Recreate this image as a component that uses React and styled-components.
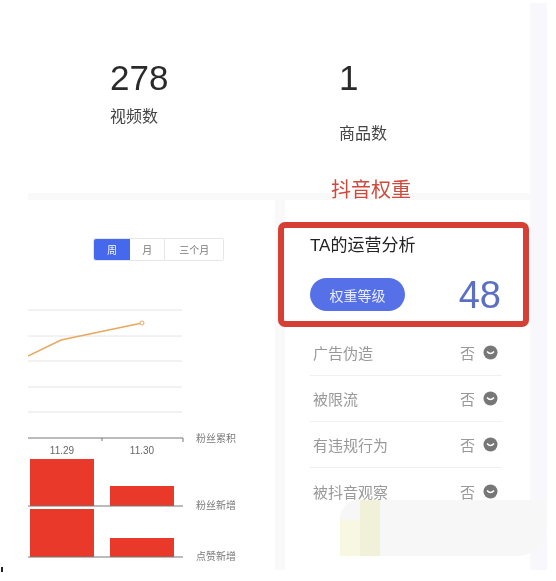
import React from 'react'
import styled, { createGlobalStyle } from 'styled-components'

const Global = createGlobalStyle`
  html, body { margin: 0; padding: 0; background: #fff; }
  body { font-family: "Liberation Sans", "Noto Sans CJK SC", sans-serif; }
`

const Page = styled.div`
  position: relative;
  width: 556px;
  height: 581px;
  overflow: hidden;
  background: #fff;
  display: flex;
  filter: blur(0.7px);
`
const Main = styled.div`
  width: 502px;
  margin-left: 28px;
  display: flex;
  flex-direction: column;
  height: 570px;
`
const SideStrip = styled.div`
  width: 17px;
  height: 567px;
  margin-top: 3px;
  background: #f8f8fc;
`
const Stats = styled.div`
  height: 193px;
  display: flex;
  padding-left: 82px;
  box-sizing: border-box;
  background: #fff;
`
const Stat = styled.div`
  width: ${(props) => props.width};
  padding-top: 58px;
  color: #2a2a2a;
`
const StatNum = styled.div`
  font-size: 35px;
  line-height: 40px;
`
const StatLabel = styled.div`
  font-size: 16px;
  line-height: 22px;
  color: #444;
  margin-top: ${(props) => props.top};
`
const Lower = styled.div`
  flex: 1;
  display: flex;
  gap: 10px;
  padding-top: 7px;
  background: #f9f9fa;
`
const ChartPanel = styled.div`
  width: 247px;
  background: #fff;
  display: flex;
  flex-direction: column;
`
const RangeBar = styled.div`
  display: flex;
  margin: 38px 0 0 65px;
  width: 131px;
  height: 23px;
  border: 1px solid #e6e6e8;
  border-radius: 2px;
  box-sizing: border-box;
`
const RangeBtn = styled.div`
  width: ${(props) => props.width};
  display: flex;
  align-items: center;
  justify-content: center;
  font-size: 10px;
  color: ${(props) => (props.active ? '#fff' : '#777')};
  background: ${(props) => (props.active ? '#4668ec' : '#fff')};
  border-right: ${(props) => (props.active ? 'none' : '1px solid #e6e6e8')};
  border-radius: ${(props) => (props.active ? '2px 0 0 2px' : '0')};
  &:last-child { border-right: none; }
`
const Chart = styled.svg`
  display: block;
  margin-top: 39px;
`
const AnalysisPanel = styled.div`
  flex: 1;
  background: #fff;
  padding: 0 28px 0 25px;
  display: flex;
  flex-direction: column;
`
const Title = styled.div`
  margin-top: 34px;
  font-size: 17px;
  line-height: 24px;
  color: #222;
`
const ScoreRow = styled.div`
  margin-top: 20px;
  display: flex;
  align-items: center;
  justify-content: space-between;
  height: 33px;
  padding-right: 1px;
`
const Pill = styled.div`
  width: 95px;
  height: 33px;
  border-radius: 17px;
  background: #5670e8;
  color: #e8ecff;
  font-size: 14px;
  display: flex;
  align-items: center;
  justify-content: center;
`
const Score = styled.div`
  font-size: 38px;
  line-height: 44px;
  margin-top: 1px;
  color: #5b6fc4;
`
const Rows = styled.div`
  margin-top: 19px;
  display: flex;
  flex-direction: column;
`
const Row = styled.div`
  height: 46px;
  display: flex;
  align-items: center;
  justify-content: space-between;
  padding: 0 4px 0 3px;
  border-bottom: 1px solid #f0f0f0;
  box-sizing: border-box;
  font-size: 15px;
  color: #999;
  &:last-child { border-bottom: none; }
`
const RowValue = styled.div`
  display: flex;
  align-items: center;
  gap: 8px;
`
const Annotation = styled.div`
  position: absolute;
  left: 331px;
  top: 177px;
  font-size: 20px;
  line-height: 26px;
  color: #cf4a3c;
`
const Highlight = styled.div`
  position: absolute;
  left: 278px;
  top: 222px;
  width: 251px;
  height: 105px;
  box-sizing: border-box;
  border: 6px solid #d63f33;
  border-radius: 7px;
`
const Smudge = styled.div`
  position: absolute;
  left: 340px;
  top: 500px;
  width: 206px;
  height: 56px;
  background: #f7f7f8;
  border-radius: 20px 4px 30px 40px;
`
const SmudgePatch = styled.div`
  position: absolute;
  left: ${(props) => props.left};
  top: ${(props) => props.top};
  width: 20px;
  bottom: 0;
  background: ${(props) => props.color};
`
const Tick = styled.div`
  position: absolute;
  left: 1px;
  top: 567px;
  width: 2px;
  height: 5px;
  background: #222;
`

const StatusIcon = () => (
  <svg width="15" height="15" viewBox="0 0 15 15">
    <circle cx="7.5" cy="7.5" r="7" fill="#777" />
    <path d="M4 6.5 Q7.5 10.5 11 6.5" fill="none" stroke="#fff" strokeWidth="1.5" />
  </svg>
)

const gridY = [10, 36, 61, 87, 112]

const App = () => {
  const rows = ['广告伪造', '被限流', '有违规行为', '被抖音观察']
  return (
    <Page>
      <Global />
      <Main>
        <Stats>
          <Stat width="229px">
            <StatNum>278</StatNum>
            <StatLabel top="8px">视频数</StatLabel>
          </Stat>
          <Stat>
            <StatNum>1</StatNum>
            <StatLabel top="25px">商品数</StatLabel>
          </Stat>
        </Stats>
        <Lower>
          <ChartPanel>
            <RangeBar>
              <RangeBtn width="37px" active>周</RangeBtn>
              <RangeBtn width="35px">月</RangeBtn>
              <RangeBtn width="59px">三个月</RangeBtn>
            </RangeBar>
            <Chart width="247" height="270" viewBox="0 0 247 270">
              {gridY.map((y) => (
                <line key={y} x1="0" x2="154" y1={y} y2={y} stroke="#e4e4e6" strokeWidth="1" />
              ))}
              <polyline points="0,56 33,40 114,23" fill="none" stroke="#e8a85f" strokeWidth="1.5" />
              <circle cx="114" cy="23" r="2" fill="#fff" stroke="#e8a85f" />
              <path d="M0 138H155M74 138v3M155 138v4" stroke="#777" strokeWidth="1" fill="none" />
              <text x="34" y="154" fontSize="10" fill="#666" textAnchor="middle">11.29</text>
              <text x="114" y="154" fontSize="10" fill="#666" textAnchor="middle">11.30</text>
              <text x="168" y="142" fontSize="10" fill="#777">粉丝累积</text>
              <rect x="2" y="159" width="64" height="47" fill="#e8392b" />
              <rect x="82" y="186" width="64" height="20" fill="#e8392b" />
              <line x1="0" x2="155" y1="206" y2="206" stroke="#777" />
              <text x="168" y="209" fontSize="10" fill="#777">粉丝新增</text>
              <rect x="2" y="209" width="64" height="48" fill="#e8392b" />
              <rect x="82" y="238" width="64" height="19" fill="#e8392b" />
              <line x1="0" x2="155" y1="257" y2="257" stroke="#777" />
              <text x="168" y="260" fontSize="10" fill="#777">点赞新增</text>
            </Chart>
          </ChartPanel>
          <AnalysisPanel>
            <Title>TA的运营分析</Title>
            <ScoreRow>
              <Pill>权重等级</Pill>
              <Score>48</Score>
            </ScoreRow>
            <Rows>
              {rows.map((name) => (
                <Row key={name}>
                  <span>{name}</span>
                  <RowValue>否<StatusIcon /></RowValue>
                </Row>
              ))}
            </Rows>
          </AnalysisPanel>
        </Lower>
      </Main>
      <SideStrip />
      <Annotation>抖音权重</Annotation>
      <Highlight />
      <Smudge>
        <SmudgePatch left="0" top="20px" color="#f8f8e2" />
        <SmudgePatch left="20px" top="0" color="#f1f1da" />
      </Smudge>
      <Tick />
    </Page>
  )
}

export default App
